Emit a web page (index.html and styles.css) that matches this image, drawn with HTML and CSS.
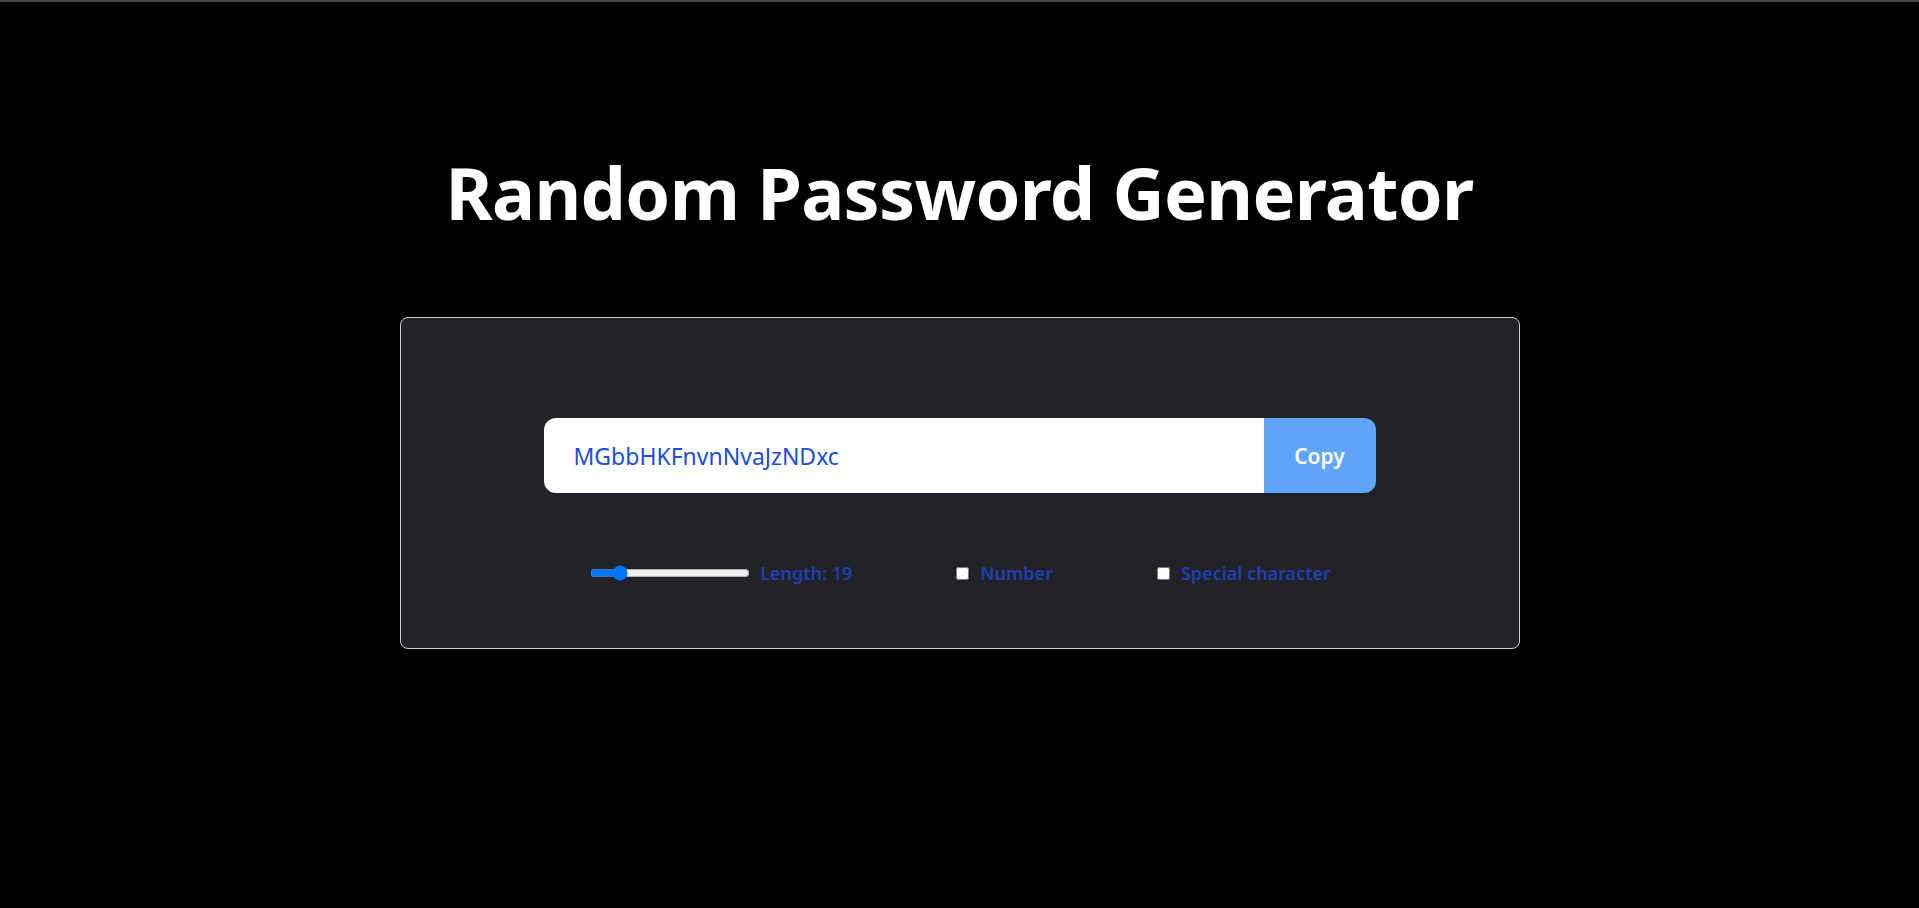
FILE: index.html
```html
<!DOCTYPE html>
<html lang="en">
<head>
<meta charset="utf-8">
<title>Random Password Generator</title>
<link rel="stylesheet" href="styles.css">
</head>
<body>
<div class="topbar"></div>
<main class="page">
  <h1 class="title">Random Password Generator</h1>
  <section class="card">
    <div class="input-group">
      <input class="password" type="text" value="MGbbHKFnvnNvaJzNDxc" readonly>
      <button class="copy">Copy</button>
    </div>
    <div class="controls">
      <div class="control">
        <input class="range" type="range" min="8" max="80" value="19">
        <label class="label">Length: 19</label>
      </div>
      <div class="control">
        <input class="check" type="checkbox" id="num">
        <label class="label" for="num">Number</label>
      </div>
      <div class="control">
        <input class="check" type="checkbox" id="spec">
        <label class="label" for="spec">Special character</label>
      </div>
    </div>
  </section>
</main>
</body>
</html>
```

FILE: styles.css
```css
* { box-sizing: border-box; }
html, body {
  margin: 0;
  padding: 0;
  background: #000;
  font-family: "Noto Sans", "Open Sans", sans-serif;
}
.topbar {
  height: 2px;
  background: #474747;
}
.page {
  display: flex;
  flex-direction: column;
  align-items: center;
}
.title {
  margin: 140px 0 0;
  color: #fff;
  font-size: 72px;
  font-weight: 700;
  line-height: 100px;
  letter-spacing: -0.7px;
}
.card {
  margin-top: 75px;
  width: 1120px;
  height: 332px;
  background: #212328;
  border: 1px solid #cfcfcf;
  border-radius: 8px;
  padding: 100px 144px 0;
  display: flex;
  flex-direction: column;
  align-items: center;
}
.input-group {
  display: flex;
  width: 832px;
  height: 75px;
  border-radius: 12px;
  overflow: hidden;
}
.password {
  flex: 1;
  border: 0;
  outline: none;
  background: #fff;
  padding: 0 30px;
  font-family: inherit;
  font-size: 23px;
  color: #1d4ed8;
}
.copy {
  width: 112px;
  border: 0;
  background: #60a5fa;
  color: #fff;
  font-family: inherit;
  font-size: 21px;
  font-weight: 600;
  cursor: pointer;
}
.controls {
  margin-top: 68px;
  display: flex;
  align-items: center;
  gap: 100px;
}
.control {
  display: flex;
  align-items: center;
  gap: 8px;
}
.range {
  width: 160px;
  margin: 2px;
}
.check {
  margin: 3px 3px 3px 4px;
}
.label {
  color: #1e40af;
  font-size: 18px;
  font-weight: 600;
}
```
